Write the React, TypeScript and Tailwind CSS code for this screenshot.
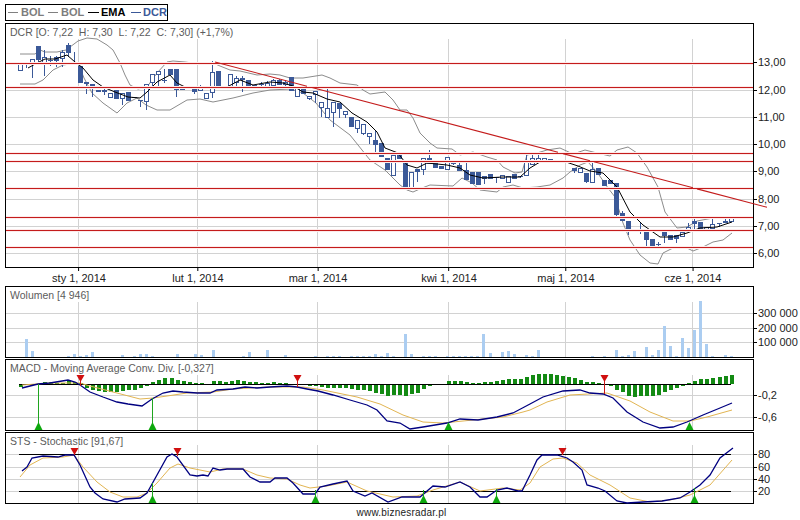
const gridX = [78, 197, 317, 448, 565, 692];

// x, body top, body bottom, wick top, wick bottom, filled
const candles: number[][] = [
  [20, 63, 70, 62, 71, 0], [26, 63, 65, 62, 68, 1], [32, 59, 64, 59, 78, 0], [38, 46, 60, 46, 64, 1],
  [44, 57, 63, 50, 76, 0], [50, 60, 61, 56, 66, 1], [56, 57, 61, 56, 67, 1], [62, 52, 58, 50, 67, 0],
  [68, 45, 53, 43, 57, 1], [74, 62, 63, 52, 63, 1], [80, 66, 83, 66, 83, 1], [86, 82, 84, 82, 94, 1],
  [92, 84, 85, 84, 97, 0], [98, 90, 92, 90, 92, 1], [104, 90, 91, 87, 95, 0], [110, 93, 97, 93, 97, 0],
  [116, 90, 99, 90, 99, 1], [122, 93, 98, 93, 105, 0], [128, 92, 101, 92, 101, 1], [134, 97, 98, 97, 98, 1],
  [140, 100, 101, 100, 107, 1], [146, 84, 101, 84, 110, 0], [152, 74, 82, 74, 88, 0], [158, 71, 74, 71, 87, 0],
  [164, 80, 81, 69, 83, 1], [170, 69, 75, 69, 75, 1], [176, 69, 90, 69, 97, 1], [182, 87, 90, 87, 90, 1],
  [188, 88, 89, 88, 89, 1], [194, 89, 92, 89, 94, 1], [200, 87, 90, 85, 90, 0], [206, 93, 98, 93, 98, 0],
  [212, 72, 92, 61, 98, 0], [218, 71, 87, 71, 87, 1], [224, 86, 87, 86, 87, 1], [230, 74, 87, 74, 87, 0],
  [236, 78, 82, 76, 88, 0], [242, 78, 80, 76, 92, 1], [248, 80, 87, 80, 88, 1], [254, 85, 87, 85, 87, 0],
  [261, 84, 85, 82, 88, 1], [267, 83, 86, 81, 86, 0], [273, 80, 85, 79, 85, 0], [279, 80, 85, 79, 85, 1],
  [285, 82, 84, 80, 88, 0], [291, 77, 91, 77, 91, 1], [297, 88, 96, 88, 96, 0], [303, 88, 94, 88, 94, 1],
  [309, 96, 98, 96, 100, 0], [315, 91, 94, 91, 103, 0], [321, 102, 107, 102, 117, 0], [327, 108, 117, 88, 117, 0],
  [333, 102, 112, 102, 127, 0], [339, 103, 109, 103, 118, 1], [345, 111, 114, 111, 118, 0], [351, 117, 127, 117, 127, 1],
  [357, 120, 128, 120, 133, 0], [363, 124, 133, 124, 135, 0], [369, 133, 136, 133, 144, 0], [375, 140, 145, 130, 152, 1],
  [381, 143, 157, 143, 157, 1], [387, 158, 170, 158, 170, 1], [393, 155, 175, 155, 175, 0], [399, 154, 159, 154, 159, 1],
  [405, 163, 187, 163, 187, 1], [411, 172, 187, 172, 187, 0], [417, 169, 172, 169, 182, 1], [423, 158, 169, 158, 175, 0],
  [429, 158, 164, 150, 164, 1], [435, 162, 168, 162, 168, 1], [441, 166, 169, 166, 169, 1], [447, 157, 169, 157, 169, 0],
  [453, 163, 164, 163, 165, 1], [459, 165, 171, 160, 171, 1], [466, 170, 180, 160, 180, 1], [472, 172, 184, 172, 184, 1],
  [478, 172, 185, 172, 185, 1], [484, 176, 179, 176, 184, 1], [490, 174, 179, 174, 179, 1], [496, 177, 178, 177, 183, 1],
  [502, 175, 178, 175, 178, 0], [508, 176, 182, 176, 182, 0], [514, 174, 179, 174, 179, 1], [520, 176, 177, 176, 178, 1],
  [526, 162, 175, 153, 175, 0], [532, 158, 164, 153, 165, 0], [538, 158, 162, 153, 162, 0], [544, 158, 162, 158, 162, 0],
  [550, 159, 160, 159, 163, 1], [556, 160, 161, 160, 163, 1], [562, 160, 162, 160, 162, 1], [574, 168, 171, 168, 173, 1],
  [580, 168, 172, 168, 172, 0], [586, 173, 182, 173, 183, 1], [592, 169, 182, 161, 182, 0], [598, 168, 175, 168, 175, 1],
  [604, 180, 186, 180, 186, 1], [610, 180, 184, 180, 184, 1], [616, 183, 215, 183, 218, 1], [622, 213, 221, 211, 221, 1],
  [628, 221, 232, 221, 235, 1], [634, 230, 231, 230, 232, 1], [640, 230, 231, 223, 234, 1], [646, 229, 240, 229, 247, 1],
  [652, 239, 246, 239, 246, 1], [658, 244, 245, 242, 247, 1], [664, 231, 236, 231, 243, 1], [670, 235, 240, 235, 240, 1],
  [676, 235, 239, 235, 243, 1], [682, 232, 236, 232, 236, 0], [688, 227, 231, 223, 231, 0], [694, 221, 224, 218, 232, 1],
  [700, 222, 229, 222, 229, 1], [706, 227, 229, 227, 229, 0], [712, 224, 228, 218, 228, 0], [719, 223, 224, 223, 227, 1],
  [725, 221, 223, 217, 223, 1], [731, 218, 221, 218, 221, 0],
];

const upperBand =
  "20,54 35,54 40,50 45,52 57,52 66,50 78,41 87,38 97,39 107,45 113,50 120,63 125,75 130,85 138,89 147,87 157,73 167,62 173,61 185,62 200,64 213,63 220,66 230,70 240,71 257,75 270,74 280,75 290,78 303,78 322,75 330,78 340,83 357,85 363,90 370,94 385,92 393,100 400,110 407,110 413,118 420,133 430,143 437,148 452,149 460,155 473,152 487,157 497,160 503,167 515,173 522,172 527,155 537,153 547,150 560,148 573,154 585,150 597,153 610,156 617,150 628,147 637,153 647,167 658,187 665,212 677,228 687,227 697,221 713,218 730,217";
const lowerBand =
  "20,84 35,84 43,80 53,70 63,65 78,63 84,78 92,93 103,103 117,113 127,103 137,98 146,105 157,110 170,110 187,100 200,99 213,102 233,98 253,93 270,90 290,89 303,93 316,103 330,120 350,135 370,160 385,170 400,185 407,190 413,192 422,188 430,185 453,186 462,178 472,183 480,190 497,192 503,187 513,185 523,188 537,187 550,185 563,178 570,172 580,165 588,162 597,172 608,188 615,197 623,223 630,240 640,255 650,263 658,264 663,253 673,248 685,247 693,251 703,247 713,242 723,240 732,233";
const ema =
  "28,68 37,63 45,59 55,59 67,55 75,62 83,68 93,80 103,87 115,92 128,97 140,98 147,92 157,82 170,75 177,83 185,87 200,88 213,87 227,87 240,80 253,85 270,82 283,83 293,86 303,92 313,93 327,99 340,102 352,113 367,122 377,132 385,148 398,153 407,165 417,168 427,163 447,165 460,168 470,175 483,178 503,177 520,177 530,168 540,162 563,161 578,166 590,171 603,173 617,187 630,212 643,225 660,237 673,237 687,233 700,228 717,227 732,222";

const redLevels = [63, 87, 153, 161, 188, 217, 230, 247];

const volumes: number[][] = [
  [26, 339], [32, 351], [68, 356], [74, 354], [80, 356], [86, 355], [92, 352], [122, 355], [134, 356], [140, 354],
  [146, 354], [152, 356], [177, 354], [195, 354], [201, 355], [213, 350], [243, 356], [249, 352], [267, 350], [285, 355],
  [315, 356], [327, 356], [333, 356], [339, 356], [351, 356], [357, 356], [363, 356], [369, 356], [375, 354], [381, 356],
  [387, 353], [393, 356], [405, 334], [411, 354], [423, 356], [429, 356], [435, 356], [447, 356], [453, 356], [459, 356],
  [465, 356], [471, 356], [477, 356], [483, 334], [490, 353], [502, 352], [508, 351], [514, 354], [526, 355], [532, 356],
  [538, 350], [592, 356], [604, 356], [616, 350], [622, 356], [628, 355], [634, 351], [646, 347], [652, 355], [658, 350],
  [664, 326], [670, 346], [676, 356], [682, 338], [688, 348], [694, 330], [700, 301], [706, 344], [712, 356], [725, 355],
  [731, 356],
];

// x, end of the bar; the bar runs from the zero line at y = 384
const histogram: number[][] = [
  [20, 387], [44, 382], [50, 382], [56, 383], [62, 383], [68, 381], [74, 382], [80, 383], [86, 388], [92, 390], [98, 391],
  [104, 392], [110, 392], [116, 392], [122, 391], [128, 390], [134, 390], [140, 388], [146, 386], [152, 382], [158, 380],
  [164, 378], [171, 378], [177, 380], [183, 381], [189, 382], [195, 383], [201, 383], [213, 381], [219, 381], [225, 382],
  [231, 381], [237, 380], [243, 381], [249, 382], [255, 382], [261, 383], [267, 383], [273, 382], [279, 383], [285, 383],
  [309, 386], [315, 386], [321, 387], [327, 388], [333, 388], [339, 388], [345, 388], [351, 389], [357, 390], [363, 390],
  [369, 391], [375, 393], [381, 394], [387, 396], [393, 395], [399, 395], [405, 396], [411, 394], [417, 393], [423, 389],
  [429, 386], [448, 381], [454, 381], [460, 381], [466, 382], [472, 383], [478, 383], [484, 382], [490, 382], [496, 381],
  [502, 380], [508, 379], [514, 379], [520, 379], [526, 377], [532, 375], [538, 374], [544, 374], [550, 374], [556, 375],
  [562, 376], [568, 377], [574, 378], [580, 380], [586, 382], [592, 382], [598, 383], [610, 386], [616, 390], [622, 392],
  [628, 396], [634, 397], [640, 396], [646, 396], [652, 396], [658, 395], [664, 392], [670, 390], [676, 388], [682, 386],
  [688, 383], [694, 381], [700, 379], [706, 379], [712, 378], [719, 377], [725, 376], [731, 375],
];

const macdLine =
  "22,388 30,386 38,384 50,383 68,380 75,382 80,385 90,392 103,397 117,402 128,404 142,406 152,399 163,393 173,391 183,392 197,393 210,393 217,390 233,389 245,387 257,388 270,387 287,386 297,387 307,389 318,391 333,395 350,400 367,405 377,410 387,421 400,423 410,429 423,427 447,423 460,419 478,420 497,417 513,413 530,404 543,397 563,391 580,390 590,393 603,394 613,398 627,412 643,422 660,428 673,427 687,422 703,415 720,408 732,403";
const macdSignal =
  "22,385 50,383 80,383 90,386 113,392 140,399 153,398 167,396 187,393 213,392 233,389 250,388 270,387 303,387 323,390 357,397 380,404 403,415 423,422 443,423 473,420 503,417 523,412 530,410 547,402 570,395 607,393 630,401 650,412 673,421 690,421 707,417 732,410";

const stsLine =
  "22,471 27,467 32,458 43,456 58,457 65,455 74,455 80,465 90,487 95,493 103,499 117,502 125,499 140,498 147,493 157,475 167,457 172,454 177,457 190,475 197,476 203,475 208,476 213,468 220,470 227,469 243,469 250,477 260,482 270,482 275,478 287,478 293,483 303,494 315,494 320,487 333,484 347,481 353,491 365,496 372,493 388,502 402,497 420,497 433,486 445,487 460,482 470,487 480,497 487,497 497,490 507,488 518,491 522,491 530,475 537,460 542,455 557,455 567,458 573,462 582,470 587,485 598,488 605,491 617,501 627,503 643,502 662,501 680,498 690,492 700,485 710,475 720,458 733,448";
const stsSignal =
  "20,477 30,465 43,458 63,457 74,455 83,467 97,482 110,492 123,497 137,497 147,493 157,483 170,468 178,464 190,468 210,472 223,469 243,469 257,475 270,478 287,479 300,485 310,488 327,486 347,482 367,491 393,497 417,496 433,490 460,482 480,491 503,488 520,490 530,483 540,467 553,459 563,458 577,463 590,475 610,485 630,498 650,502 670,500 690,495 710,485 732,460";

function Sell({ x, tip, stem }: { x: number; tip: number; stem: number }) {
  return (
    <g>
      <line x1={x + 0.5} x2={x + 0.5} y1={tip} y2={stem} stroke="#c81818" />
      <polygon points={`${x - 3.5},${tip - 6} ${x + 4.5},${tip - 6} ${x + 0.5},${tip + 1}`} fill="#d00f0f" />
    </g>
  );
}

function Buy({ x, base, stem }: { x: number; base: number; stem: number }) {
  return (
    <g>
      <line x1={x + 0.5} x2={x + 0.5} y1={stem} y2={base} stroke="#1fa51f" />
      <polygon points={`${x - 3.5},${base} ${x + 4.5},${base} ${x + 0.5},${base - 8}`} fill="#0ea80e" />
    </g>
  );
}

function Panel({
  title,
  top,
  height,
  gridTop,
  levels,
  labels,
  children,
}: {
  title?: string;
  top: number;
  height: number;
  gridTop: number;
  levels: number[];
  labels: [string, number][];
  children: React.ReactNode;
}) {
  const inner = height - 2;
  return (
    <div className="flex">
      <div className="relative w-[749px] shrink-0 border border-black" style={{ height }}>
        <svg
          className="absolute left-0 top-0 overflow-visible"
          width={747}
          height={inner}
          viewBox={`6 ${top + 1} 747 ${inner}`}
        >
          <g stroke="#d2d2d2" shapeRendering="crispEdges">
            {levels.map((y) => (
              <line key={y} x1={6} x2={753} y1={y + 0.5} y2={y + 0.5} />
            ))}
            {gridX.map((x) => (
              <line key={x} x1={x + 0.5} x2={x + 0.5} y1={gridTop} y2={top + height - 1} />
            ))}
          </g>
          {children}
        </svg>
        {title && <p className="absolute left-[4px] top-[2px] text-[10.5px] leading-[13px] text-[#5c5c5c] whitespace-pre">{title}</p>}
      </div>
      <div className="relative w-[47px] text-[11px] leading-[13px] text-[#222222]">
        {labels.map(([text, y]) => (
          <div key={text} className="absolute left-0 flex items-center gap-[1px] whitespace-nowrap" style={{ top: y - top - 6 }}>
            <span className="h-px w-[3px] bg-black" />
            <span>{text}</span>
          </div>
        ))}
      </div>
    </div>
  );
}

export default function App() {
  return (
    <div className="h-[520px] w-[800px] overflow-hidden bg-white pl-[5px] pt-[4px] font-['Liberation_Sans',Arial,sans-serif]">
      {/* Legend */}
      <div className="mb-[2px] flex h-[17px] w-[163px] items-center border border-black pl-[2px] text-[11px] font-bold">
        <span className="h-px w-[10px] bg-[#808080]" />
        <span className="ml-[3px] w-[27px] text-[#7d7d7d]">BOL</span>
        <span className="h-px w-[10px] bg-[#808080]" />
        <span className="ml-[3px] w-[27px] text-[#7d7d7d]">BOL</span>
        <span className="h-px w-[11px] bg-black" />
        <span className="ml-[2px] w-[30px] text-black">EMA</span>
        <span className="h-px w-[10px] bg-[#3b5998]" />
        <span className="ml-[2px] text-[#3b5998]">DCR</span>
      </div>

      {/* Price */}
      <Panel
        title="DCR [O: 7,22  H: 7,30  L: 7,22  C: 7,30] (+1,7%)"
        top={23}
        height={245}
        gridTop={39}
        levels={[62, 90, 117, 144, 171, 199, 226, 253]}
        labels={[
          ["13,00", 62],
          ["12,00", 90],
          ["11,00", 117],
          ["10,00", 144],
          ["9,00", 171],
          ["8,00", 199],
          ["7,00", 226],
          ["6,00", 253],
        ]}
      >
        <polyline points={upperBand} fill="none" stroke="#8c8c8c" />
        <polyline points={lowerBand} fill="none" stroke="#8c8c8c" />
        {candles.map(([x, top, bottom, high, low, filled]) => (
          <g key={x} shapeRendering="crispEdges">
            <line x1={x + 0.5} x2={x + 0.5} y1={high} y2={low} stroke="#3b5998" />
            {filled ? (
              <rect x={x - 2} y={top} width={5} height={bottom - top} fill="#3b5998" />
            ) : (
              <rect x={x - 1.5} y={top + 0.5} width={4} height={bottom - top} fill="#ffffff" stroke="#3b5998" />
            )}
          </g>
        ))}
        <polyline points={ema} fill="none" stroke="#000000" />
        {redLevels.map((y) => (
          <g key={y} shapeRendering="crispEdges">
            <line x1={6} x2={753} y1={y + 0.5} y2={y + 0.5} stroke="#fdeaea" strokeWidth={3} />
            <line x1={6} x2={753} y1={y + 0.5} y2={y + 0.5} stroke="#c41c1c" />
          </g>
        ))}
        <g stroke="#c41c1c" strokeWidth={1.1}>
          <line x1={215} y1={62} x2={307} y2={86.2} />
          <line x1={312} y1={87.5} x2={558} y2={152.3} />
          <line x1={563} y1={153.6} x2={590} y2={160.7} />
          <line x1={594} y1={161.8} x2={693} y2={187.8} />
          <line x1={697} y1={188.9} x2={767} y2={207.3} />
        </g>
      </Panel>

      {/* Date axis */}
      <div className="relative h-[18px] w-[749px] text-[11px] leading-[13px] text-[#222222]">
        {[
          ["sty 1, 2014", 78],
          ["lut 1, 2014", 197],
          ["mar 1, 2014", 317],
          ["kwi 1, 2014", 448],
          ["maj 1, 2014", 565],
          ["cze 1, 2014", 692],
        ].map(([text, x]) => (
          <div key={text} className="absolute top-0 flex -translate-x-1/2 flex-col items-center" style={{ left: Number(x) - 4 }}>
            <span className="h-[3px] w-px bg-black" />
            <span className="mt-[1px] whitespace-nowrap">{text}</span>
          </div>
        ))}
      </div>

      {/* Volume */}
      <div className="mb-px">
        <Panel
          title="Wolumen [4 946]"
          top={286}
          height={72}
          gridTop={302}
          levels={[313, 328, 342]}
          labels={[
            ["300 000", 313],
            ["200 000", 328],
            ["100 000", 342],
          ]}
        >
          {volumes.map(([x, y]) => (
            <rect key={x} x={x - 1} y={y} width={3} height={357 - y} fill="#abcdf1" shapeRendering="crispEdges" />
          ))}
        </Panel>
      </div>

      {/* MACD */}
      <div className="mb-px">
        <Panel
          title="MACD - Moving Average Conv. Div. [-0,327]"
          top={359}
          height={72}
          gridTop={375}
          levels={[395, 417]}
          labels={[
            ["-0,2", 395],
            ["-0,6", 417],
          ]}
        >
          {histogram.map(([x, y]) => (
            <rect
              key={x}
              x={x - 1}
              y={Math.min(y, 384)}
              width={4}
              height={Math.abs(y - 384)}
              fill="#138a13"
              shapeRendering="crispEdges"
            />
          ))}
          <line x1={19} x2={731} y1={384.5} y2={384.5} stroke="#000000" shapeRendering="crispEdges" />
          <polyline points={macdSignal} fill="none" stroke="#e2b552" />
          <polyline points={macdLine} fill="none" stroke="#000080" strokeWidth={1.3} />
          <Sell x={80} tip={381} stem={386} />
          <Sell x={297} tip={381} stem={387} />
          <Sell x={604} tip={381} stem={394} />
          <Buy x={38} base={430} stem={384} />
          <Buy x={152} base={430} stem={398} />
          <Buy x={448} base={430} stem={423} />
          <Buy x={689} base={430} stem={423} />
        </Panel>
      </div>

      {/* Stochastic */}
      <Panel
        title="STS - Stochastic [91,67]"
        top={432}
        height={72}
        gridTop={445}
        levels={[454, 467, 479, 491]}
        labels={[
          ["80", 454],
          ["60", 467],
          ["40", 479],
          ["20", 491],
        ]}
      >
        <g stroke="#000000" shapeRendering="crispEdges">
          <line x1={19} x2={731} y1={454.5} y2={454.5} />
          <line x1={19} x2={731} y1={491.5} y2={491.5} />
        </g>
        <polyline points={stsSignal} fill="none" stroke="#e2b552" />
        <polyline points={stsLine} fill="none" stroke="#000080" strokeWidth={1.3} />
        <Sell x={74} tip={454} stem={455} />
        <Sell x={177} tip={454} stem={456} />
        <Sell x={562} tip={454} stem={455} />
        <Buy x={152} base={503} stem={483} />
        <Buy x={315} base={503} stem={490} />
        <Buy x={423} base={503} stem={490} />
        <Buy x={496} base={503} stem={489} />
        <Buy x={694} base={503} stem={488} />
      </Panel>

      {/* Source */}
      <p className="mt-[3px] w-[793px] text-center text-[10px] leading-[12px] tracking-[0.2px] text-[#222222]">www.biznesradar.pl</p>
    </div>
  );
}
